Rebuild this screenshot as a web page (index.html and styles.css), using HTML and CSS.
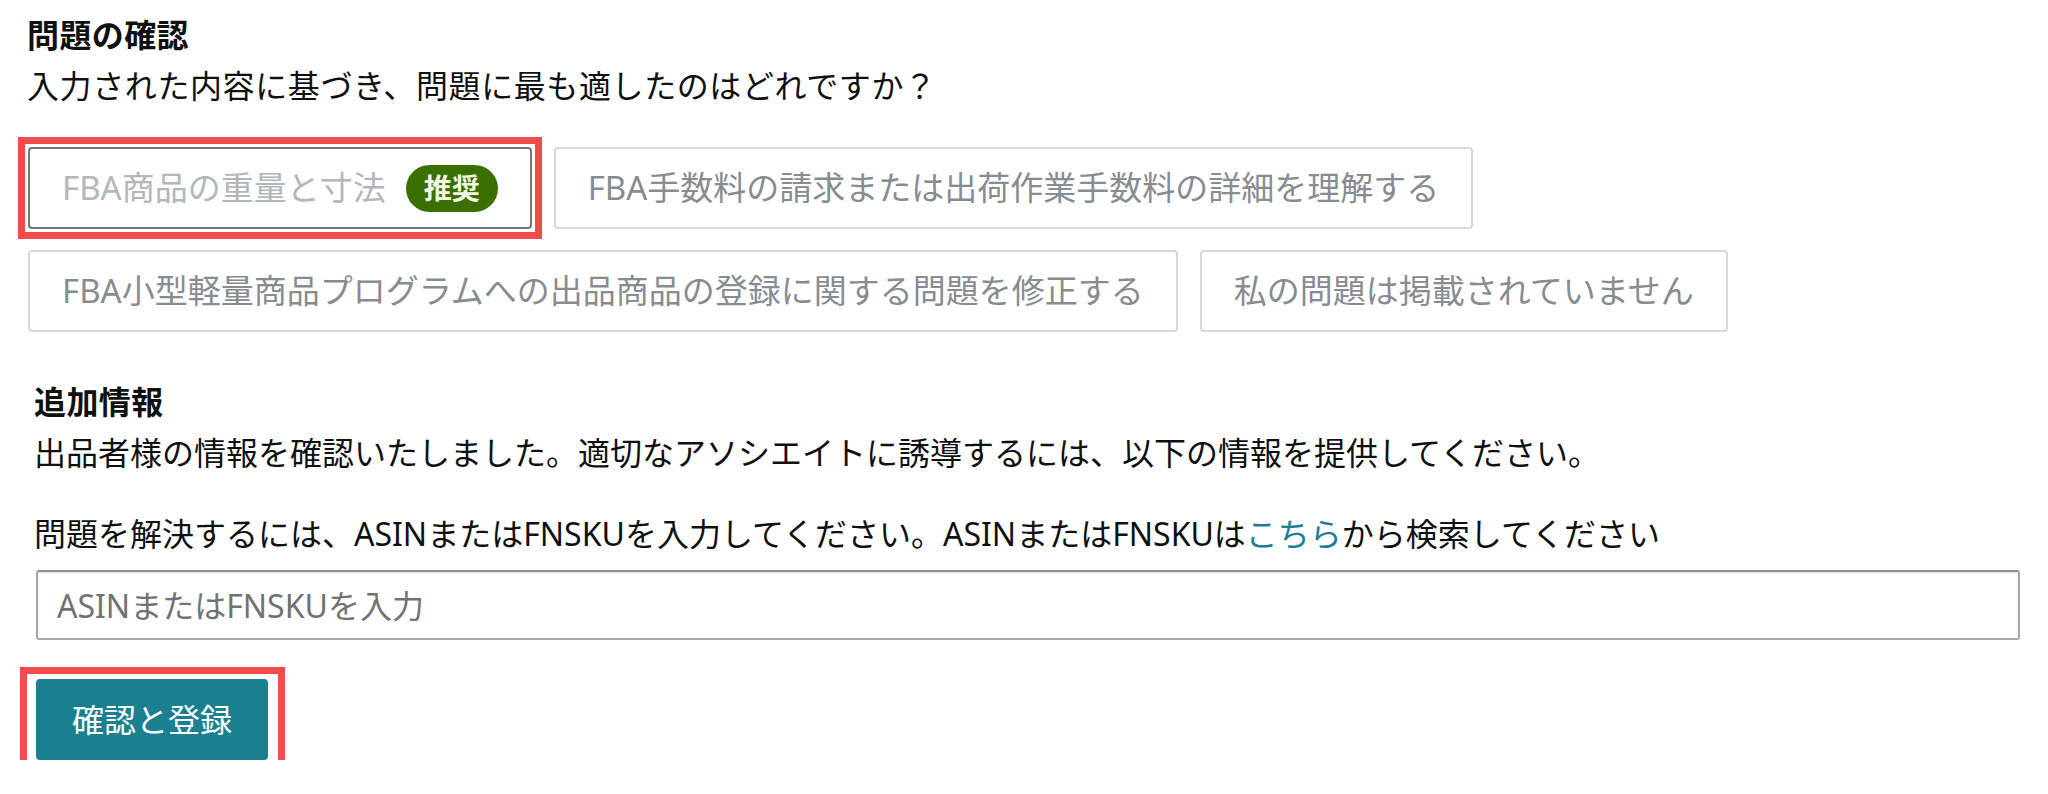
FILE: index.html
```html
<!DOCTYPE html>
<html lang="ja">
<head>
<meta charset="utf-8">
<title>問題の確認</title>
<link rel="stylesheet" href="styles.css">
</head>
<body>
<main class="page">
  <section class="confirm">
    <h2 class="title">問題の確認</h2>
    <p class="desc desc--question">入力された内容に基づき、問題に最も適したのはどれですか？</p>
    <div class="options">
      <button class="option option--selected" type="button">FBA商品の重量と寸法<span class="badge">推奨</span></button>
      <button class="option" type="button">FBA手数料の請求または出荷作業手数料の詳細を理解する</button>
      <button class="option" type="button">FBA小型軽量商品プログラムへの出品商品の登録に関する問題を修正する</button>
      <button class="option" type="button">私の問題は掲載されていません</button>
    </div>
  </section>
  <section class="extra">
    <h2 class="title">追加情報</h2>
    <p class="desc">出品者様の情報を確認いたしました。適切なアソシエイトに誘導するには、以下の情報を提供してください。</p>
    <label class="field-label" for="asin">問題を解決するには、ASINまたはFNSKUを入力してください。ASINまたはFNSKUは<a href="#" class="link">こちら</a>から検索してください</label>
    <input id="asin" class="field" type="text" placeholder="ASINまたはFNSKUを入力">
    <div class="actions">
      <button class="primary" type="button">確認と登録</button>
    </div>
  </section>
</main>
</body>
</html>
```
FILE: styles.css
```css
* { box-sizing: border-box; }
html, body { margin: 0; background: #fff; }
body {
  font-family: "Noto Sans", "Noto Sans CJK JP", sans-serif;
  font-size: 32px;
  line-height: 48px;
  color: #0f1111;
}
.page { padding: 11px 28px 0 27px; }
.title { margin: 0; font-size: 32px; font-weight: 700; line-height: 48px; letter-spacing: 0.4px; }
.desc { margin: 3px 0 0; line-height: 48px; }
.desc--question { letter-spacing: 0.6px; }

.options {
  display: flex;
  flex-wrap: wrap;
  gap: 21px 22px;
  margin-top: 37px;
  padding-left: 1px;
}
.option {
  position: relative;
  height: 82px;
  display: inline-flex;
  align-items: center;
  padding: 0 32px;
  border: 2px solid #d5d9d9;
  border-radius: 4px;
  background: #fff;
  font: inherit;
  font-size: 33px;
  line-height: 48px;
  color: #878c91;
}
.option--selected { border-color: #717676; color: #b1b7bb; }
.option--selected::after {
  content: "";
  position: absolute;
  inset: -12px;
  border: 7px solid #f24b4b;
  pointer-events: none;
}
.badge {
  display: inline-flex;
  align-items: center;
  height: 47px;
  padding: 0 18px;
  margin-left: 20px;
  border-radius: 24px;
  background: #3a7000;
  color: #f4f8e6;
  font-size: 28px;
  font-weight: 700;
  line-height: 47px;
}

.extra { margin-top: 46px; padding-left: 7px; }
.field-label { display: block; margin-top: 33px; line-height: 48px; }
.link { color: #1d7f90; text-decoration: none; }
.field {
  display: block;
  width: calc(100% - 2px);
  height: 70px;
  margin: 12px 0 0 2px;
  padding: 0 19px;
  border: 2px solid #a3a7a7;
  border-top-color: #8e9292;
  border-radius: 3px;
  box-shadow: inset 0 1px 2px rgba(15, 17, 17, 0.15);
  font: inherit;
  color: #0f1111;
  background: #fff;
}
.field::placeholder { color: #6f7373; }

.actions { margin-top: 39px; padding-left: 2px; }
.primary {
  position: relative;
  height: 81px;
  padding: 0 36px;
  border: none;
  border-radius: 4px;
  background: #1a7f8e;
  color: #fff;
  font: inherit;
  line-height: 48px;
}
.primary::after {
  content: "";
  position: absolute;
  inset: -12px -17px -10px -16px;
  border: 7px solid #f24b4b;
  pointer-events: none;
}
```
